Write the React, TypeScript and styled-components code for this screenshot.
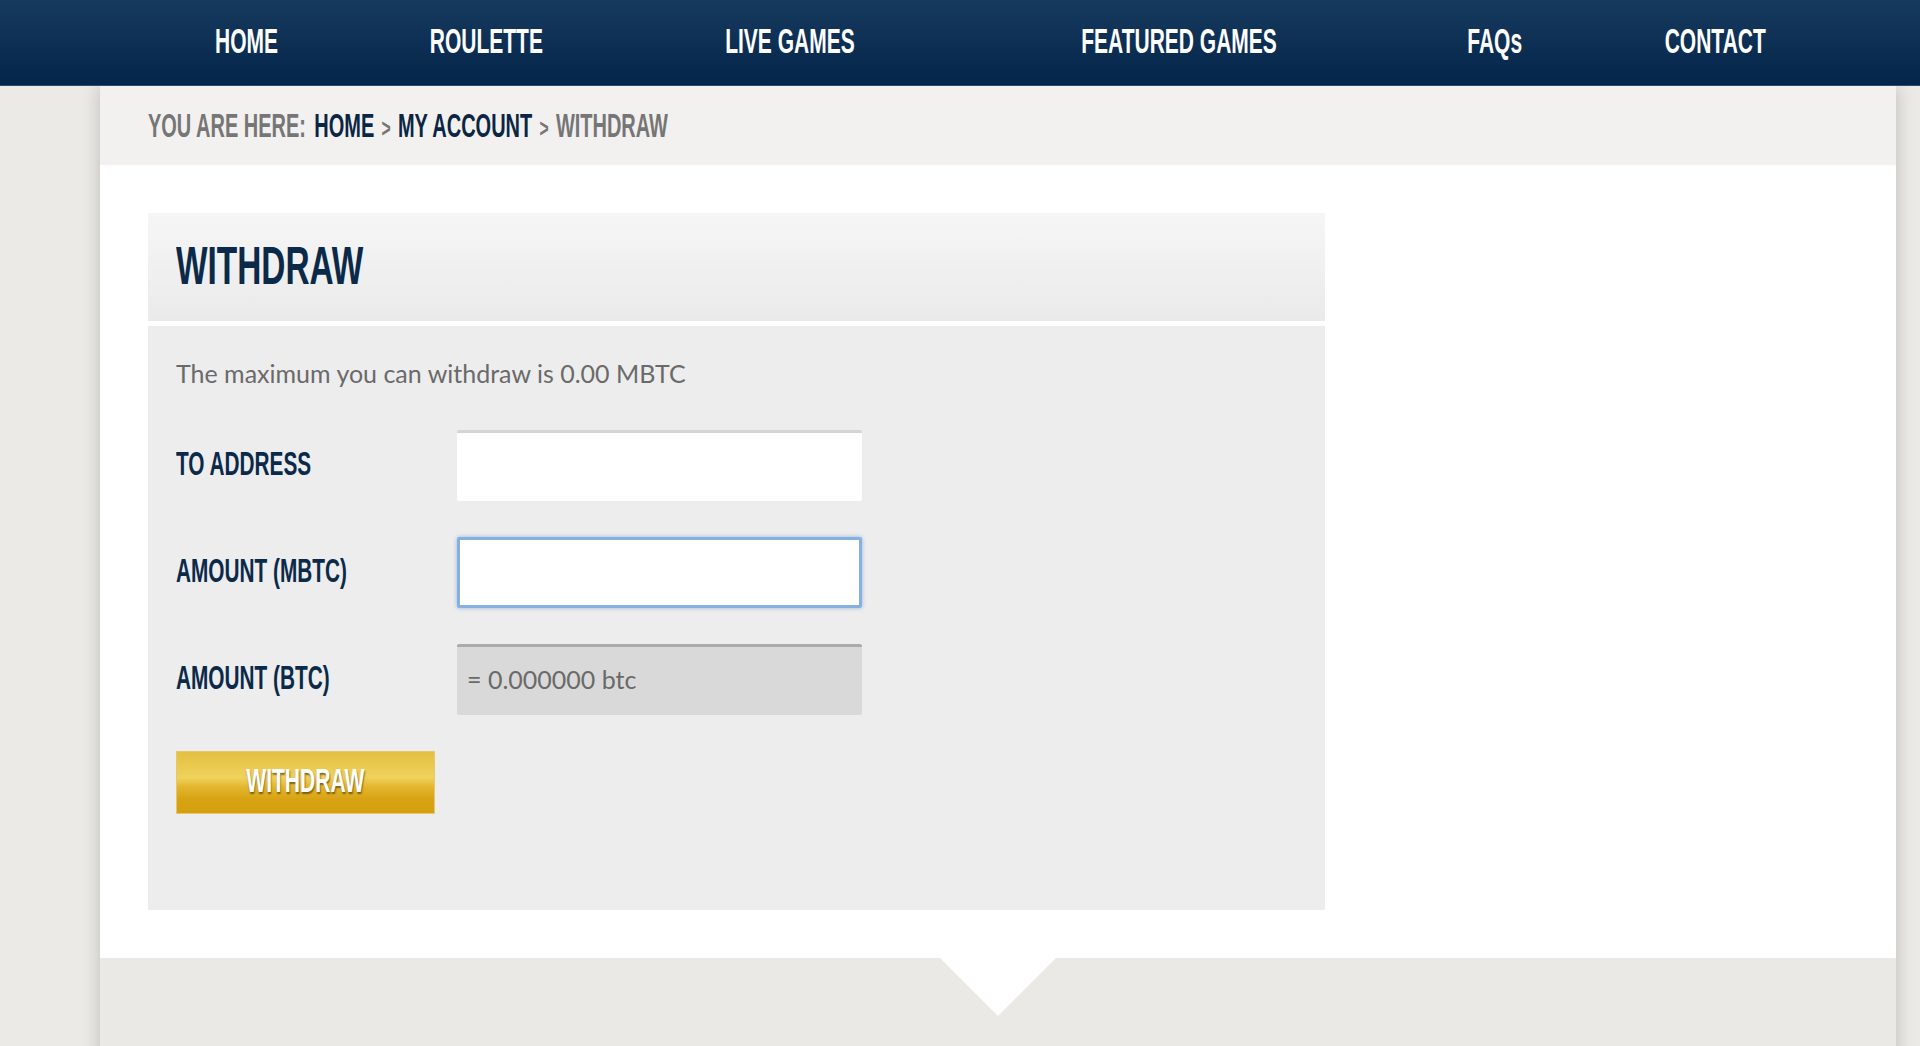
import React from "react";
import styled, { createGlobalStyle } from "styled-components";

const COND = `"Liberation Sans Narrow", "Liberation Sans", Arial, sans-serif`;
const BODY = `Lato, "Open Sans", "Liberation Sans", sans-serif`;

const GlobalStyle = createGlobalStyle`
  html, body { margin: 0; padding: 0; }
  body {
    background: #ebeae6;
    font-family: ${BODY};
    overflow: hidden;
  }
`;

const Nav = styled.nav`
  position: relative;
  z-index: 2;
  height: 85px;
  border-bottom: 1px solid #2d4b6b;
  background: linear-gradient(#163a5e, #04254a);
  display: grid;
  grid-template-columns: 240px 240px 368px 410px 222px 218px;
  padding-left: 126px;
  align-items: center;
`;

const NavItem = styled.a`
  text-align: center;
  color: #fff;
  text-decoration: none;
  padding-bottom: 4px;
`;

const NavLabel = styled.span`
  display: inline-block;
  font-family: ${COND};
  font-weight: 700;
  font-size: 35px;
  line-height: 1;
  white-space: nowrap;
  transform: scaleX(0.6);
`;

const Shell = styled.div`
  position: relative;
  z-index: 1;
  margin-left: 100px;
  width: 1796px;
  background: #ebe9e6;
  box-shadow: 0 0 18px rgba(0, 0, 0, 0.2);
`;

const Crumbs = styled.div`
  height: 79px;
  background: #f2f1ef;
  display: flex;
  align-items: center;
  padding-left: 48px;
`;

const CrumbLine = styled.div`
  font-family: ${COND};
  font-weight: 700;
  font-size: 33px;
  line-height: 1;
  color: #767676;
  white-space: nowrap;
  transform: scaleX(0.605);
  transform-origin: left center;
`;

const CrumbLink = styled.a`
  color: #0b2544;
  text-decoration: none;
`;

const Sep = styled.span`
  font-size: 26px;
  margin: 0 12px;
  color: #767676;
`;

const Lead = styled.span`
  margin-right: 14px;
`;

const Main = styled.main`
  background: #fff;
  padding: 48px 0 48px 48px;
`;

const Panel = styled.section`
  width: 1177px;
  display: flex;
  flex-direction: column;
  gap: 5px;
`;

const PanelHead = styled.header`
  height: 108px;
  box-sizing: border-box;
  background: linear-gradient(#f6f6f6, #eaeaea);
  display: flex;
  align-items: center;
  padding: 0 0 4px 28px;
`;

const Title = styled.h1`
  margin: 0;
  font-family: ${COND};
  font-weight: 700;
  font-size: 53px;
  line-height: 1;
  color: #0b2a4a;
  white-space: nowrap;
  transform: scaleX(0.63);
  transform-origin: left center;
`;

const PanelBody = styled.div`
  height: 584px;
  box-sizing: border-box;
  background: #ededed;
  padding: 30px 28px;
`;

const Note = styled.p`
  margin: 0;
  font-family: ${BODY};
  font-size: 25px;
  line-height: 34px;
  color: #6a6a6a;
`;

const Form = styled.form`
  margin-top: 40px;
  display: grid;
  grid-template-columns: 281px 405px;
  row-gap: 36px;
  align-items: center;
`;

const Label = styled.label`
  padding-bottom: 4px;
  font-family: ${COND};
  font-weight: 700;
  font-size: 33px;
  line-height: 1;
  color: #0b2a4a;
  white-space: nowrap;
  transform: scaleX(0.63);
  transform-origin: left center;
`;

const Field = styled.input<{ $state?: "focus" | "disabled" }>`
  box-sizing: border-box;
  width: 405px;
  height: 71px;
  margin: 0;
  padding: 0 10px 4px;
  border-radius: 2px;
  outline: none;
  font-family: ${BODY};
  font-size: 25px;
  color: #6a6a6a;
  background: ${(p) => (p.$state === "disabled" ? "#d9d9d9" : "#fff")};
  border: ${(p) =>
    p.$state === "focus" ? "3px solid #86b0df" : "none"};
  border-top: ${(p) =>
    p.$state === "focus"
      ? "3px solid #86b0df"
      : p.$state === "disabled"
      ? "3px solid #ababab"
      : "3px solid #d5d5d5"};
  box-shadow: ${(p) =>
    p.$state === "focus" ? "0 0 4px rgba(80, 140, 210, 0.55)" : "none"};
  &::placeholder { color: #6a6a6a; opacity: 1; }
`;

const ButtonRow = styled.div`
  grid-column: 1 / -1;
`;

const Button = styled.button`
  width: 259px;
  height: 63px;
  margin: 0;
  padding: 0 0 5px;
  border: 1px solid #e6c76a;
  background: linear-gradient(
    #e4bf42 0%,
    #efd25c 42%,
    #e3b52d 58%,
    #d7a312 78%,
    #d5a010 100%
  );
  cursor: pointer;
  display: flex;
  align-items: center;
  justify-content: center;
`;

const ButtonLabel = styled.span`
  display: inline-block;
  font-family: ${COND};
  font-weight: 700;
  font-size: 34px;
  line-height: 1;
  color: #fff;
  text-shadow: 1px 2px 2px rgba(60, 40, 0, 0.6);
  transform: scaleX(0.62);
`;

const Footer = styled.footer`
  position: relative;
  height: 140px;
  background: #ebe9e6;
  &::before {
    content: "";
    position: absolute;
    left: 50%;
    top: 0;
    margin-left: -58px;
    border-left: 58px solid transparent;
    border-right: 58px solid transparent;
    border-top: 58px solid #fff;
  }
`;

const navItems = ["HOME", "ROULETTE", "LIVE GAMES", "FEATURED GAMES", "FAQs", "CONTACT"];

export default function App() {
  return (
    <>
      <GlobalStyle />
      <Nav>
        {navItems.map((n) => (
          <NavItem key={n} href="#">
            <NavLabel>{n}</NavLabel>
          </NavItem>
        ))}
      </Nav>
      <Shell>
        <Crumbs>
          <CrumbLine>
            <Lead>YOU ARE HERE:</Lead>
            <CrumbLink href="#">HOME</CrumbLink>
            <Sep>&gt;</Sep>
            <CrumbLink href="#">MY ACCOUNT</CrumbLink>
            <Sep>&gt;</Sep>
            WITHDRAW
          </CrumbLine>
        </Crumbs>
        <Main>
          <Panel>
            <PanelHead>
              <Title>WITHDRAW</Title>
            </PanelHead>
            <PanelBody>
              <Note>The maximum you can withdraw is 0.00 MBTC</Note>
              <Form onSubmit={(e) => e.preventDefault()}>
                <Label>TO ADDRESS</Label>
                <Field type="text" />
                <Label>AMOUNT (MBTC)</Label>
                <Field type="text" $state="focus" />
                <Label>AMOUNT (BTC)</Label>
                <Field type="text" $state="disabled" readOnly value="= 0.000000 btc" />
                <ButtonRow>
                  <Button type="submit">
                    <ButtonLabel>WITHDRAW</ButtonLabel>
                  </Button>
                </ButtonRow>
              </Form>
            </PanelBody>
          </Panel>
        </Main>
        <Footer />
      </Shell>
    </>
  );
}
